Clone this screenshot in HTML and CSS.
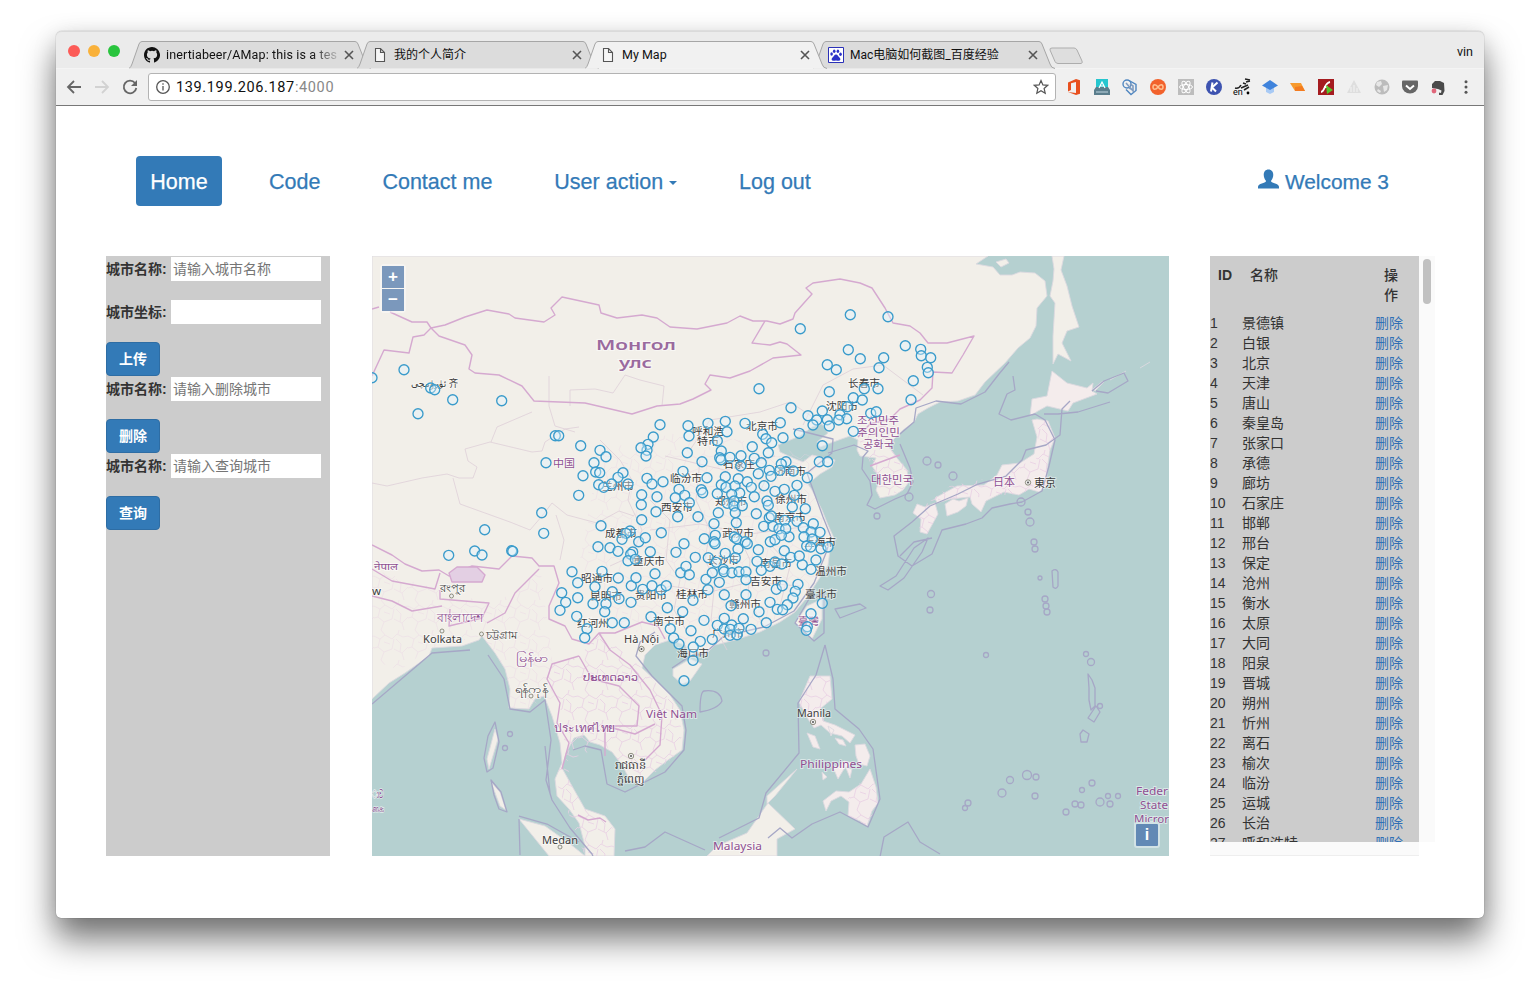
FILE: index.html
```html
<!DOCTYPE html>
<html lang="zh-CN">
<head>
<meta charset="utf-8">
<title>My Map</title>
<link rel="stylesheet" href="styles.css">
</head>
<body>
<div class="window">
  <header class="tabstrip">
    <div class="lights"><i class="red"></i><i class="amber"></i><i class="green"></i></div>
    <div class="tabs">
      <div class="tab">
        <svg class="shape" viewBox="0 0 242 28"><path d="M0 27.5Q2 26 3 23L10 3Q11 .5 13 .5H226Q228 .5 229 3L237 23Q238 27 242 27.5"/></svg>
        <svg class="fav" viewBox="0 0 16 16"><path fill="#111" d="M8 0C3.58 0 0 3.58 0 8c0 3.54 2.29 6.53 5.47 7.59.4.07.55-.17.55-.38v-1.49c-2.01.37-2.53-.49-2.69-.94-.09-.23-.48-.94-.82-1.13-.28-.15-.68-.52-.01-.53.63-.01 1.08.58 1.23.82.72 1.21 1.87.87 2.33.66.07-.52.28-.87.51-1.07-1.78-.2-3.64-.89-3.64-3.95 0-.87.31-1.59.82-2.15-.08-.2-.36-1.02.08-2.12 0 0 .67-.21 2.2.82a7.6 7.6 0 0 1 4 0c1.53-1.04 2.2-.82 2.2-.82.44 1.1.16 1.92.08 2.12.51.56.82 1.27.82 2.15 0 3.07-1.87 3.75-3.65 3.95.29.25.54.73.54 1.48v2.19c0 .21.15.46.55.38A8 8 0 0 0 8 0z"/></svg>
        <span class="title fade">inertiabeer/AMap: this is a tes</span>
        <svg class="close" viewBox="0 0 10 10"><path d="M1 1l8 8M9 1L1 9"/></svg>
      </div>
      <div class="tab">
        <svg class="shape" viewBox="0 0 242 28"><path d="M0 27.5Q2 26 3 23L10 3Q11 .5 13 .5H226Q228 .5 229 3L237 23Q238 27 242 27.5"/></svg>
        <svg class="fav page" viewBox="0 0 16 16"><path d="M3.5 1.5h5l4 4v9h-9zM8.5 1.5v4h4"/></svg>
        <span class="title cjk">我的个人简介</span>
        <svg class="close" viewBox="0 0 10 10"><path d="M1 1l8 8M9 1L1 9"/></svg>
      </div>
      <div class="tab active">
        <svg class="shape" viewBox="0 0 242 28"><path d="M0 27.5Q2 26 3 23L10 3Q11 .5 13 .5H226Q228 .5 229 3L237 23Q238 27 242 27.5"/></svg>
        <svg class="fav page" viewBox="0 0 16 16"><path d="M3.5 1.5h5l4 4v9h-9zM8.5 1.5v4h4"/></svg>
        <span class="title">My Map</span>
        <svg class="close" viewBox="0 0 10 10"><path d="M1 1l8 8M9 1L1 9"/></svg>
      </div>
      <div class="tab">
        <svg class="shape" viewBox="0 0 242 28"><path d="M0 27.5Q2 26 3 23L10 3Q11 .5 13 .5H226Q228 .5 229 3L237 23Q238 27 242 27.5"/></svg>
        <svg class="fav" viewBox="0 0 16 16"><path fill="#fff" stroke="#2b31b8" d="M.5.5h15v15H.5z"/><g fill="#2b31c8"><ellipse cx="3.6" cy="7" rx="1.3" ry="1.8"/><ellipse cx="6.2" cy="4.2" rx="1.3" ry="1.8"/><ellipse cx="9.9" cy="4.2" rx="1.3" ry="1.8"/><ellipse cx="12.5" cy="7.2" rx="1.3" ry="1.8"/><path d="M8 7.6c1.800 0 2.200 2 3.700 3.200 1.200 1.100.8 3-1 3-1 0-1.800-.3-2.700-.3s-1.700.3-2.700.3c-1.800 0-2.200-1.900-1-3C5.800 9.600 6.200 7.600 8 7.600z"/></g></svg>
        <span class="title cjk">Mac电脑如何截图_百度经验</span>
        <svg class="close" viewBox="0 0 10 10"><path d="M1 1l8 8M9 1L1 9"/></svg>
      </div>
      <svg class="newtab" viewBox="0 0 34 18"><path d="M3 1h22q2 0 3 2l5 11q1 2-1 2.500H9q-2 0-3-2L1 3q-.5-2 2-2z"/></svg>
    </div>
    <span class="user">vin</span>
  </header>

  <div class="toolbar">
    <svg class="nav-ic" viewBox="0 0 16 16"><path d="M15 8H2M8 2L2 8l6 6"/></svg>
    <svg class="nav-ic off" viewBox="0 0 16 16"><path d="M1 8h13M8 2l6 6-6 6"/></svg>
    <svg class="nav-ic" viewBox="0 0 16 16"><path d="M13 4A6.300 6.300 0 1 0 14.300 9"/><path class="solid" d="M15 1v6H9z"/></svg>
    <div class="omnibox">
      <svg class="info" viewBox="0 0 16 16"><circle cx="8" cy="8" r="6.300"/><path d="M8 7v4.500M8 4.300v1.500"/></svg>
      <span class="url">139.199.206.187<em>:4000</em></span>
      <svg class="star" viewBox="0 0 16 16"><path d="M8 1.500l1.900 4.400 4.800.4-3.600 3.200 1.100 4.700L8 11.700l-4.200 2.500 1.100-4.700L1.300 6.300l4.800-.4z"/></svg>
    </div>
    <div class="exts">
      <svg viewBox="0 0 16 16"><path fill="#e8501e" d="M2 3.500L10 0l4 1.200v13.600L10 16l-8-3 8 1V3L5 4.300V11l-3 1.500z"/></svg>
      <svg viewBox="0 0 16 16"><path fill="#26c6cf" d="M2 0h12v9H2z"/><path fill="#5a7d8c" d="M2 8h12l2 3v5H0v-5z"/><path d="M5 9l3-6 3 6M6 7h4" fill="none" stroke="#fff" stroke-width="1.200"/><path d="M2 13h12" stroke="#9fb9c4" stroke-width="1.500"/></svg>
      <svg viewBox="0 0 16 16" fill="none" stroke="#4f86c0" stroke-width="1.400"><path d="M7 1.500l7 4v6l-5 4-5-5"/><circle cx="5" cy="5" r="4"/><path d="M8 5l3 2v4L7 9M4 4l8 9" stroke="#7f9cc0" stroke-width="1.600"/></svg>
      <svg viewBox="0 0 16 16"><circle cx="8" cy="8" r="8" fill="#f2622c"/><path d="M8 8C6 5 3 5 3 8s3 3 5 0 5-3 5 0-3 3-5 0z" fill="none" stroke="#ffc090" stroke-width="1.500"/></svg>
      <svg viewBox="0 0 16 16"><path fill="#bdbdbd" d="M0 0h16v16H0z"/><g fill="none" stroke="#fff"><ellipse cx="8" cy="8" rx="6.500" ry="2.500"/><ellipse cx="8" cy="8" rx="6.500" ry="2.500" transform="rotate(60 8 8)"/><ellipse cx="8" cy="8" rx="6.500" ry="2.500" transform="rotate(120 8 8)"/></g></svg>
      <svg viewBox="0 0 16 16"><circle cx="8" cy="8" r="8" fill="#3d53b0"/><path d="M6.500 3.500l-1.500 9M11.500 3.500L6 8.500l4 4" fill="none" stroke="#fff" stroke-width="2"/></svg>
      <svg viewBox="0 0 16 16"><path d="M1 9q4 1 6-3M7 9l7-3M9 4l3 1M11 0l5 1M12 3l4-1M10 11l5-3" fill="none" stroke="#222" stroke-width="1.500"/><circle cx="14" cy="14" r="1.400"/><text x="-1" y="16" font-size="9" class="tiny">en</text></svg>
      <svg viewBox="0 0 16 16"><path fill="#a8caf5" d="M4 8h8v5l-4 2-4-2z"/><path fill="#3f83dc" d="M8 1l8 5.500-8 4.500-8-4.500z"/></svg>
      <svg viewBox="0 0 16 16"><path fill="#f79a2d" d="M0 4l11 0 4 8H5z"/><path fill="#f37b20" d="M5 8l7-1 3 5H5z"/></svg>
      <svg viewBox="0 0 16 16"><path fill="#a51c20" d="M0 0h16v16H0z"/><path d="M3 13c4 0 3-9 9-10M6 8h4" fill="none" stroke="#fff" stroke-width="1.800"/><path fill="#55c52b" d="M8 6l7 5-6 4z"/></svg>
      <svg viewBox="0 0 16 16"><path fill="#dedede" d="M8 1l7 13H1z"/><path d="M5 13V8M8 13V6M11 13V9" stroke="#f4f4f4"/></svg>
      <svg viewBox="0 0 16 16"><circle cx="8" cy="8" r="7.500" fill="#bcbcbc"/><path fill="#e6e6e6" d="M3 3l4-1 1 3-3 3-3-2zM9 7l5-1-1 5-3 2zM4 10l3 2-1 2-3-2z"/></svg>
      <svg viewBox="0 0 16 16"><path fill="#666" d="M1 1.500h14q1 0 1 1V7a8 7.500 0 0 1-16 0V2.500q0-1 1-1z"/><path d="M4 6.500l4 3.500 4-3.500" fill="none" stroke="#fff" stroke-width="2"/></svg>
      <svg viewBox="0 0 16 16"><path fill="#4a4a4a" d="M2 5l3-3h5l4 2 .5 8-2 4H9v-2.500l2 .5.500-2.500L8 10 2 9z"/><circle cx="4" cy="12" r="2.400" fill="#e0667a"/></svg>
      <svg viewBox="0 0 16 16" fill="#555"><circle cx="8" cy="2.800" r="1.500"/><circle cx="8" cy="8" r="1.500"/><circle cx="8" cy="13.200" r="1.500"/></svg>
    </div>
  </div>

  <main class="page-body">
    <nav class="nav">
      <a class="pill on">Home</a><a class="pill">Code</a><a class="pill">Contact me</a><a class="pill">User action <b class="caret"></b></a><a class="pill">Log out</a>
      <a class="pill welcome"><svg viewBox="0 0 22 20"><path d="M11 0c3.200 0 5 2.300 5 5.500 0 2.600-1 4.700-2.200 6v1.300c.2.900 8.200 2.200 8.200 5.200v2H0v-2c0-3 8-4.300 8.200-5.200v-1.300C7 10.200 6 8.100 6 5.500 6 2.300 7.800 0 11 0z"/></svg> Welcome 3</a>
    </nav>

    <div class="columns">
      <form class="side">
        <div class="field"><label>城市名称:</label><input placeholder="请输入城市名称"></div>
        <div class="field"><label>城市坐标:</label><input></div>
        <button type="button">上传</button>
        <div class="field"><label>城市名称:</label><input placeholder="请输入删除城市"></div>
        <button type="button">删除</button>
        <div class="field"><label>城市名称:</label><input placeholder="请输入查询城市"></div>
        <button type="button">查询</button>
      </form>

      <section class="map">
        <svg class="canvas" viewBox="372 256 797 600">
          <defs>
            <pattern id="web" width="34" height="30" patternUnits="userSpaceOnUse"><path class="fine" d="M0 6l6 3 5-4 7 4 5-5 6 3 5-1M6 9l-2 8 6 5 8-3 2-10M20 19l8 4 2 7M10 22l-3 8M28 23l6-6M0 18l4-1M24 4l1-4M7 0l4 5M22 9l5 5-1 8M10 12l6 2"/></pattern>
          </defs>
          <g class="land">
            <path d="M372 256H988L976 264 993 267 1000 275 1012 275 1020 272 1035 273 1045 281 1047 296 1037 308 1036 326 1030 338 1018 348 1005 363 985 382 975 395 958 401 940 402 928 408 918 414 914 422 903 430 893 440 889 447 897 458 907 470 909 482 903 490 895 495 880 498 876 490 880 478 872 466 876 458 860 456 857 450 858 440 850 436 836 441 820 447 817 442 828 433 822 424 812 427 800 436 778 445 780 452 793 458 803 462 812 455 835 460 832 467 820 474 808 484 812 490 822 510 828 525 834 538 830 550 828 565 815 585 805 600 795 612 780 622 760 632 735 640 715 645 705 655 697 652 690 656 685 645 670 640 655 645 645 655 642 668 655 680 670 695 680 710 684 730 682 750 668 760 655 770 640 785 630 780 622 765 612 752 600 745 590 742 584 735 574 738 566 753 562 768 572 786 585 809 605 816 615 829 614 856H585V846L579 823 569 809 557 796 555 779 562 763 560 743 552 716 544 696 535 699 529 709 509 708 510 689 505 669 495 653 482 636 479 640 462 646 432 648 429 656 405 673 389 683 372 699Z"/>
            <path d="M1052 256h12l-3 14 6 16 5 20 7 21-12 4-5 12 9 18-13-7-5 10V336l2-33-5-7 3-15 1-12zM996 262l10-3 3 4-8 4z"/>
            <path d="M673 669l17-10 12 5-12 17-8 3-9-8zM822 599v20l-10 20-17-16 12-17z"/>
            <path d="M768 803l27 26-18 10v17h-70l10-10 30-13zM519 819l26 7 24 17 16 13h-36zM767 796l30-27-22 27-8 8zM495 729l3 10-9 30-2-10zM491 782l9 10 6 18-6-4z"/>
            <path d="M1093 389l10-8 1 1-9 9zM1110 380l16-9M1140 368l10-6"/>
          </g>
          <g class="land pinkish">
            <path d="M1052 371l15 12 20 5 6-5-1 8 5 3-24 9-5 8-21-5-9 5-8 5 2-17 15-3zM1032 420l5-1 11 2 7 17-5 12-3 20 0 16-8 6-10-3-10 6-15-3-18 9-5 11-9-8-2-7-20 2-13 4-2-5 22-12 27-1 13-10 5-10 18-2 14-9 3-17zM945 504l8-5 6 2 9-3-2 8-8 6-11 4zM917 504l8 3 10-4 3 11-11 20-7-2 1-13-8-6z"/>
            <path d="M810 676h20l2 23-12 10 3 12 12 4 8 4 12 6-5 8-8-7-12-3-9-8-7 3-6-9-9-17zM807 733l8 3 5 13-7-2zM855 745l10-1 5 12-3 10-8-2-3-8zM870 769l6 18 2 16-6 8-5 15-7-5-12-5 1-14-8-6-10 5-5 10-3-10 13-10 13 1 12-8zM832 765l6 2 6-6 8 2-8 6-6 10zM846 768l6 1-2 9zM828 726l6 4-3 6zM835 738l8 2 3 6-7-2zM822 772l5 5-4 3z"/>
          </g>
          <g class="weave">
            <path d="M372 569L440 590 489 603 515 593 540 566 553 664 560 703 545 697 529 709 510 708 505 669 482 636 430 648 400 670 372 660Z" opacity=".45"/>
            <path d="M579 656L552 664 547 679 560 703 565 753 572 786 585 809 614 829V856H585L555 779 562 763 605 745 640 785 682 750 680 710 642 668 600 633Z"/>
            <path d="M858 438L890 420 903 432 889 447 909 470 903 490 880 498 872 466Z"/>
            <path d="M690 430L835 460 808 484 834 538 815 585 760 632 690 650 600 620 580 560 600 450Z" opacity=".4"/>
            <path d="M1037 419l11 2 7 17-5 12-3 20 0 16-30 8-87 7 20-15 50-10 40-20zM917 504l18-1 3 11-11 20-7-2zM810 676h20l2 23-12 10 7 14-29-17zM870 769l8 34-11 23-19-10v-17z"/>
          </g>
          <g class="province">
            <path d="M372 483l15 3 35-8 25-4 12 4 14 0 4-11-9-6-3-12 25-7 42 10 10-1 3-9 20-13 14-2M453 478l7 26 50 18 20 8 12-14 10-13 15 12 30 8 22-12 15 5M491 442l6-15 35-15M549 376l0 30 6 20 20 6M570 406l0-16 25-1 18 4 12-18 15 5M560 560l4-20-8-25M600 440l20 20 12 20-4 20 14 30-10 26-22 10M640 380l24 6-2 20M650 500l20 20-4 40 14 20-6 30 12 20M700 460l-4 40 14 30-5 30 10 20-4 40 16 30M740 500l-4 30 14 30-2 40 16 26M770 470l-12 26 20 20-6 30 18 20-10 40M640 600l30-14 40 6 40-10 50 4M650 530l50-6 50 10 60-8M665 456l60 14 50-14M690 450l20-30 50-8 30-10 30 20M803 425l20-40 30-16 30-4 40 30"/>
          </g>
          <g class="border">
            <path d="M372 309l7-2M390 312l22 10h15l4 6 14-3 20-8 22-7 22 4 6 4 29 4 11-7-4-7 11-11 37 8 2 8 16 5 25-3 15 3 13 9 27 2 30-6 13-7 13 5h14l13 3 13-5 2-6 17-19-6-6 7-5 27-4 20 4 12 5 13 20 8 15 17 3 10 7 8 10h19l27-7-11 19-11 18-19-1-1 16-12 12-20 9-10 10-20 5-12 13M431 328l8 8 26 9 7 10-3 14 6 4 24 2 23 11 12 15 51 2 47 11 25-8 23-2 13-5 18-9-6-6 5-9 20 3 20-7 23-13 28-3-14-11-7-2-10 3-18-2 13-22M431 328l-7 7-11 2-4 16-25-3-12 26"/>
            <path d="M372 545l20 10 13 9 17 7 17-1 10 6 23-10 27 3 13-13 20 2 7 8h15l5 17-10 23v13l16 7 7 13 17 5 10-11h16l27-11 16 4 7 13M372 569l20 12 43 8 5-16M440 590v9l49 4-7 15-33 8 1-17M487 623l18-10 10-20 24-24M372 596l20 5 20 10 30-5M579 656l-27 8-5 15 13 24-3 20 12 20-7 26M579 656l13 23 27 7 20 20-2 20-32 0v30M599 633l11 17 20 15 20 25 12 25-2 30-15 15M605 726l30 8 20-10M578 815l10 5 12-2 6 4M870 466l16-6 14-5"/>
            <path class="block" d="M449 573l8-6 20 0 8 8-3 7-30 0z"/>
          </g>
          <g class="marine">
            <path d="M372 704L405 676 432 653 470 650M488 655l16 24 6 30 20 3 15-12 6 40-5 40 6 20 18 28 22 26 8 20M545 746l5 47M573 750l12-4 16 4 6 34 18 8 40-20 19-22 2-20-4-24-30-30-16-20 4-14 15-10M700 712q0-20 4-21 16-2 18 10-4 8-22 11zM672 668l18-12 14-2 20-18 40-9 30-16 20-28 12-30 5-16-8-20-16-44 25-20 1-14-40-10M900 444l10 24 3 14-6 12-12 5-20 10-8-4 5-10-2-14-8-12 1-12 5-6-14-6-26 8M900 434l14-12 2-14 20-7 25 3 24-12 14-18 10-12M1013 376l2 14-8 4-8 20 12 6 24-6 10 6 10 20-6 26-7 25-20 11-12 2-18 4-10 10-16 6-24 6-10 24-20 12-14-10-4-20 18-14 18-16 28-12 20-10 28-8 16-16 4-10 20-5 14-10 2-26 8-8M1044 414l14 0 20-2 32-10M1092 391l12-10 20-8 4 8-20 12-12-2M900 556l14-14 18-4M825 645l8 34 2 30 24 20 14 20 7 50-12 28-28-15-28 12-20 14-12-10-12 10M825 645l-9 30-18 28 1 50-33 40-7 25-40 20M519 819l1 36M519 816l28 8 32 18M705 850l-40-18-20 15-20 4M795 623l14-24 15-6v40l-10 8zM880 857l4-20 24-15 12 20 20 12M495 722l4 20-6 26-6 4-3-14 4-22zM491 780l10 12 6 20-8-3-5-14zM880 586l16-10 18-28 14-10-6 14-18 26-16 12zM835 609l25-5 6 4-26 10z"/>
            <path d="M1052 571q4-3 6 1v14q-2 4-5 1zM1088 674l4 6 3 8 0 18-4 4-2-10 0-12zM1092 712l4-6 4 6-6 10-6-4zM1083 730l6 4-2 8-6 0-1-8z"/>
            <g>
              <circle cx="927" cy="461" r="4"/><circle cx="938" cy="465" r="3"/><circle cx="953" cy="476" r="4"/><circle cx="909" cy="497" r="4"/><circle cx="1021" cy="502" r="4"/><circle cx="1028" cy="512" r="3"/><circle cx="1030" cy="522" r="4"/><circle cx="1034" cy="542" r="3"/><circle cx="1035" cy="549" r="3"/><circle cx="931" cy="594" r="3.500"/><circle cx="930" cy="610" r="3"/><circle cx="1045" cy="599" r="3"/><circle cx="1046" cy="606" r="3"/><circle cx="1047" cy="612" r="3"/><circle cx="1040" cy="578" r="2"/><circle cx="986" cy="655" r="2.500"/><circle cx="766" cy="653" r="3"/><circle cx="1086" cy="654" r="2.500"/><circle cx="1091" cy="662" r="3.500"/><circle cx="1100" cy="706" r="2.500"/><circle cx="1027" cy="775" r="4.500"/><circle cx="1036" cy="777" r="3"/><circle cx="1010" cy="780" r="3.500"/><circle cx="1002" cy="793" r="4"/><circle cx="1035" cy="796" r="3"/><circle cx="1092" cy="783" r="3"/><circle cx="1082" cy="790" r="2.500"/><circle cx="1075" cy="804" r="3"/><circle cx="1081" cy="805" r="3"/><circle cx="1066" cy="812" r="3"/><circle cx="1100" cy="802" r="4"/><circle cx="1110" cy="804" r="3"/><circle cx="1108" cy="796" r="2.500"/><circle cx="1118" cy="796" r="2.500"/><circle cx="968" cy="803" r="3"/><circle cx="965" cy="808" r="2.500"/><circle cx="510" cy="734" r="2.500"/><circle cx="505" cy="748" r="2.500"/><circle cx="877" cy="516" r="3"/>
            </g>
          </g>
          <g class="dots"><circle cx="451.500" cy="596" r="2"/><circle cx="442" cy="631" r="2"/><circle cx="481.500" cy="634" r="2"/><circle cx="531" cy="696" r="2"/><circle cx="560" cy="847" r="2"/><circle cx="641.500" cy="649" r="2.700"/><circle cx="631" cy="756" r="2.700"/><circle cx="813" cy="722" r="2.700"/><circle cx="1028" cy="482.500" r="2.700"/><g class="capital"><circle cx="641.500" cy="649" r="1"/><circle cx="631" cy="756" r="1"/><circle cx="813" cy="722" r="1"/><circle cx="1028" cy="482.500" r="1"/></g></g>
          <g id="labels"></g>
          <g id="cities"></g>
        </svg>
        <div class="zoom"><button type="button">+</button><button type="button">−</button></div>
        <button type="button" class="attrib">i</button>
      </section>

      <section class="list">
        <div class="scroller">
          <table>
            <thead><tr><th class="c-id">ID</th><th class="c-name">名称</th><th class="c-op">操作</th></tr></thead>
            <tbody id="rows"></tbody>
          </table>
        </div>
        <div class="track"><i></i></div>
        <div class="hscroll"></div>
      </section>
    </div>
  </main>
</div>
<script src="app.js"></script>
</body>
</html>
```

FILE: styles.css
```css
* { box-sizing: border-box; }
body { margin: 0; padding: 31px 56px 0; height: 998px; overflow: hidden; background: #fff; color: #333; font: 14px/20px "Liberation Sans", "Noto Sans CJK SC", sans-serif; }
a { color: #337ab7; text-decoration: none; }
.window { width: 1428px; height: 887px; border-radius: 6px 6px 5px 5px; background: #fff; box-shadow: 0 0 1px rgba(0,0,0,.55), 0 22px 34px rgba(0,0,0,.5), 0 6px 24px rgba(0,0,0,.14); }

.tabstrip { display: flex; height: 38px; padding-top: 9px; background: #ebebeb; border-radius: 6px 6px 0 0; border-top: 1px solid #dadada; border-bottom: 1px solid #f4f4f4; font: 12.5px/26px Roboto, "Noto Sans CJK SC", sans-serif; color: #111; }
.lights { display: flex; gap: 8px; width: 73px; padding: 4px 0 0 12px; }
.lights i { width: 12px; height: 12px; border-radius: 50%; }
.red { background: #fc5b57; } .amber { background: #f9b13a; } .green { background: #29c43d; }
.tabs { display: flex; flex: 1; }
.tab { position: relative; display: flex; align-items: center; width: 242px; height: 28px; margin-right: -14px; padding: 0 17px 0 15px; }
.shape { position: absolute; inset: 0; width: 242px; height: 28px; fill: #dcdcdc; stroke: #a6a6a6; }
.active { z-index: 2; }
.active .shape { fill: #f1f1f1; }
.fav { position: relative; flex: none; width: 16px; height: 16px; margin-right: 6px; }
.page { fill: #f6f6f6; stroke: #555; stroke-width: 1.1; }
.title { position: relative; flex: 1; white-space: nowrap; overflow: hidden; }
.title.cjk { font-size: 12px; }
.fade { -webkit-mask-image: linear-gradient(90deg, #000 84%, transparent 102%); mask-image: linear-gradient(90deg, #000 84%, transparent 102%); letter-spacing: .13px; }
.close { position: relative; width: 10px; height: 10px; margin-left: 5px; stroke: #555; stroke-width: 1.6; fill: none; }
.newtab { width: 34px; height: 18px; margin: 6px 0 0 8px; fill: #dedede; stroke: #adadad; }
.user { padding-right: 11px; line-height: 22px; }

.toolbar { display: flex; align-items: center; height: 37px; padding: 0 10px 0 10px; background: #f0f0f0; border-bottom: 1px solid #777; }
.nav-ic { width: 16px; height: 16px; margin-right: 12px; fill: none; stroke: #666; stroke-width: 1.8; }
.nav-ic.off { stroke: #d2d2d2; }
.nav-ic .solid { fill: #666; stroke: none; }
.omnibox { display: flex; align-items: center; width: 908px; height: 28px; margin-left: -2px; padding: 0 6px; background: #fff; border: 1px solid #b3b3b3; border-radius: 3px; }
.info { width: 16px; height: 16px; fill: none; stroke: #555; stroke-width: 1.3; }
.url { flex: 1; margin-left: 5px; padding-top: 1px; font: 14.5px/25px Roboto, sans-serif; letter-spacing: .64px; color: #111; }
.url em { font-style: normal; color: #888; }
.star { width: 16px; height: 16px; fill: none; stroke: #555; stroke-width: 1.2; }
.exts { display: flex; gap: 12px; margin-left: 10px; }
.exts svg { width: 16px; height: 16px; overflow: visible; }
.tiny { font-family: Roboto, sans-serif; }

.page-body { padding: 50px 50px 0; }
.nav { display: flex; gap: 32px; margin: 0 30px 50px; font-size: 21.5px; line-height: 30px; }
.pill { padding: 11px 15px 9px; height: 50px; border-radius: 4px; white-space: nowrap; -webkit-text-stroke: .25px currentColor; }
.pill.on { background: #337ab7; color: #fff; width: 86px; text-align: center; padding: 11px 0 9px; }
.caret { display: inline-block; margin-left: 0; vertical-align: middle; border: 4px solid transparent; border-top-color: #337ab7; border-bottom: 0; }
.welcome { margin-left: auto; font-size: 20.9px; }
.welcome svg { width: 21px; height: 20px; fill: #337ab7; vertical-align: 0; }

.columns { display: flex; height: 600px; }
.side { flex: none; width: 224px; background: #ccc; }
.field { display: flex; align-items: center; height: 26px; margin-bottom: 17px; }
.field label { width: 65px; font-weight: 700; }
.field input { width: 150px; height: 24px; padding: 0 2px; border: 0; font: 14px "Liberation Sans", "Noto Sans CJK SC", sans-serif; color: #333; }
.field input::placeholder { color: #757575; }
.side button { display: block; width: 54px; height: 34px; padding: 0 0 3px; border: 1px solid #2e6da4; border-radius: 4px; background: #337ab7; color: #fff; font: 700 14px "Noto Sans CJK SC", sans-serif; }

.map { position: relative; flex: none; width: 797px; margin-left: 42px; background: #b5d0d0; overflow: hidden; }
.canvas { display: block; width: 797px; height: 600px; }
.land { fill: #f2efe9; stroke: #dcd9e0; stroke-width: .9; stroke-linejoin: round; }
.pinkish { fill: #f4ecec; }
.weave { fill: url(#web); }
.fine { fill: none; stroke: #e8cfe3; stroke-width: .8; }
.province { fill: none; stroke: #decfd8; stroke-width: .8; stroke-linejoin: round; }
.border { fill: none; stroke: #d5a9d0; stroke-width: 1.4; stroke-linejoin: round; }
.block { fill: #e3cfe3; }
.marine { fill: none; stroke: #a6a7c6; stroke-width: 1.3; stroke-linejoin: round; }
.dots { fill: #eee; stroke: #776; stroke-width: .8; }
.capital { fill: #555; stroke: none; }
#labels text { font-family: "Noto Sans", "Noto Sans CJK SC", "Noto Sans CJK KR", "DejaVu Sans", sans-serif; fill: #3d3d3d; stroke: rgba(255,255,255,.5); stroke-width: 1.8px; paint-order: stroke; }
#labels .country { fill: #8f5092; }
#labels .major { font-weight: 600; fill: #9a6a9e; }
#cities circle { fill: rgba(225,246,255,.4); stroke: #3a9bcb; stroke-width: 1.35; }
.zoom { position: absolute; left: 8px; top: 8px; display: grid; gap: 1px; padding: 2px; background: rgba(255,255,255,.4); border-radius: 4px; }
.zoom button, .attrib { width: 22px; height: 22px; padding: 0; border: 0; background: #7b98bc; color: #fff; font: 700 17px/20px "Liberation Sans"; }
.attrib { position: absolute; right: 9px; bottom: 8px; width: 26px; height: 26px; background: #6289b5; border: 2px solid #d2e2e5; border-radius: 3px; font-size: 16px; }

.list { display: grid; flex: none; grid-template: 586px 14px / 209px 16px; margin-left: 41px; }
.scroller { background: #ccc; overflow: hidden; }
table { width: 209px; border-collapse: collapse; table-layout: fixed; }
th { height: 57px; padding: 9px 8px 8px; vertical-align: top; text-align: left; font-weight: 700; }
.c-id { width: 32px; padding-right: 0; }
.c-name { width: 133px; font-weight: 500; }
.c-op { width: 44px; padding: 9px 20px 8px 9px; font-weight: 500; }
td { height: 20px; padding: 0; white-space: nowrap; overflow: hidden; }
td a { color: #3070b6; }
.track { padding: 3px 4px; background: #fafafa; }
.track i { display: block; width: 8px; height: 45px; border-radius: 4px; background: #c1c1c1; }
.hscroll { background: #fafafa; border-bottom: 1px solid #eee; }
```

FILE: app.js
```js
const NS = 'http://www.w3.org/2000/svg';

const names = ['景德镇', '白银', '北京', '天津', '唐山', '秦皇岛', '张家口', '承德', '廊坊', '石家庄', '邯郸', '邢台', '保定', '沧州', '衡水', '太原', '大同', '阳泉', '晋城', '朔州', '忻州', '离石', '榆次', '临汾', '运城', '长治', '呼和浩特'];
document.getElementById('rows').innerHTML = names
  .map((n, i) => `<tr><td>${i + 1}</td><td>${n}</td><td><a>删除</a></td></tr>`).join('');

// Place names: text, left, baseline, width, size, kind
const labels = [
  ['Монгол', 596, 350, 80, 14.5, 'major'], ['улс', 619, 368, 33, 14.5, 'major'],
  ['ئۈرۈمچى 齐', 411, 387, 47, 10], ['中国', 553, 467, 22, 10, 'country'],
  ['长春市', 848, 387, 32, 10.5], ['沈阳市', 826, 410, 32, 10.5],
  ['조선민주', 857, 424, 42, 10, 'country'], ['주의인민', 857, 436, 43, 10, 'country'], ['공화국', 863, 448, 31, 10, 'country'],
  ['대한민국', 871, 484, 42, 11, 'country'], ['日本', 993, 486, 22, 11, 'country'], ['東京', 1034, 487, 22, 11],
  ['呼和浩', 692, 435, 32, 9.8], ['特市', 697, 445, 22, 9.8], ['北京市', 746, 430, 32, 10.5],
  ['石家庄', 723, 468, 32, 10.5], ['济南市', 774, 475, 32, 10.5], ['临汾市', 670, 482, 32, 10.5],
  ['兰州市', 602, 490, 32, 10.5], ['郑州市', 715, 505, 32, 10.5], ['徐州市', 775, 503, 32, 10.5], ['西安市', 661, 511, 32, 10.5],
  ['南京市', 774, 521, 32, 10.5], ['成都市', 605, 537, 32, 10.5], ['武汉市', 722, 537, 32, 10.5], ['上海市', 804, 546, 32, 10.5],
  ['重庆市', 633, 565, 32, 10.5], ['长沙市', 707, 564, 32, 10.5], ['南昌市', 760, 567, 32, 10.5],
  ['温州市', 815, 575, 32, 10.5], ['昭通市', 581, 582, 32, 10.5], ['吉安市', 750, 585, 32, 10.5], ['昆明市', 590, 600, 32, 10.5],
  ['贵阳市', 635, 599, 32, 10.5], ['桂林市', 676, 598, 32, 10.5], ['赣州市', 729, 608, 32, 10.5], ['臺北市', 805, 598, 32, 10.5],
  ['红河州', 577, 627, 32, 10.5], ['南宁市', 653, 625, 32, 10.5], ['广州市', 712, 637, 32, 10.5], ['海口市', 677, 657, 32, 10.5],
  ['臺灣', 798, 625, 21, 10.5, 'country'],
  ['नेपाल', 374, 570, 24, 10, 'country'], ['w', 372, 595, 9, 11], ['রংপুর', 440, 592, 25, 11],
  ['বাংলাদেশ', 437, 622, 46, 11.5, 'country'], ['Kolkata', 423, 643, 39, 11], ['চট্টগ্রাম', 486, 639, 31, 11],
  ['မြန်မာ', 516, 662, 31, 11, 'country'], ['ရန်ကုန်', 515, 693, 33, 11], ['Hà Nội', 624, 643, 35, 11],
  ['ປະເທດລາວ', 583, 681, 55, 11, 'country'], ['ประเทศไทย', 554, 732, 61, 11, 'country'], ['Việt Nam', 646, 718, 51, 11, 'country'],
  ['រាជធានី', 615, 769, 31, 11], ['ភ្នំពេញ', 617, 783, 27, 11], ['Manila', 797, 717, 34, 11], ['Philippines', 800, 768, 62, 11, 'country'],
  ['Malaysia', 713, 850, 49, 11.5, 'country'], ['Medan', 542, 844, 36, 11],
  ['ාව', 372, 798, 12, 11, 'country'], ['கை', 372, 812, 12, 11, 'country'],
  ['Feder', 1136, 795, 32, 11, 'country'], ['State', 1140, 809, 28, 11, 'country'], ['Micror', 1134, 823, 35, 11, 'country'],
];
const labelLayer = document.getElementById('labels');
for (const [text, x, y, w, size, kind] of labels) {
  const el = document.createElementNS(NS, 'text');
  el.textContent = text;
  el.setAttribute('x', x);
  el.setAttribute('y', y);
  el.setAttribute('font-size', size);
  el.setAttribute('textLength', w);
  el.setAttribute('lengthAdjust', 'spacingAndGlyphs');
  if (kind) el.setAttribute('class', kind);
  labelLayer.append(el);
}

// City markers, grouped by map tile; three units per pixel inside a tile
const tiles = [
  [372, 256, '0,365 96,341 176,396 188,401 242,431 138,473 389,434 550,539 560,539 626,569 684,583 702,602 666,620 522,620 633,659 671,648 683,650 753,650 738,664 680,686 695,694 719,684 768,684 620,718 509,770 515,832 338,821 308,885 330,897 230,898 419,884 422,886 687,809 774,825 762,832 750,850 678,872 714,875 738,886 800,857 782,888 776,895'],
  [640, 256, '631,176 744,182 481,218 625,281 661,308 731,305 717,335 796,269 562,326 589,341 357,398 568,407 673,398 714,398 640,425 667,432 453,455 547,465 622,452 504,479 530,492 519,507 562,491 568,510 600,476 620,488 596,492 692,472 709,467 640,526 478,532 547,569 538,617 563,617 502,665 60,506 40,543 24,565 21,583 18,600 3,575 144,509 147,540 204,502 256,496 261,527 232,554 315,502 421,500 368,535 378,548 395,560 429,545 337,572 385,590 142,590 186,617 244,585 239,605 243,611 270,604 303,599 343,607 364,620 302,630 438,617 424,624 129,646 201,665 256,662 21,667 36,684 69,677 355,653 388,643 393,661 420,643 295,668 322,677 460,645 244,686 258,694 285,690 334,694 372,689 471,688 117,700 134,718 106,725 184,701 188,710 232,713 299,711 343,722 405,706 433,700 5,716 51,722 148,740 48,767 4,746 113,782 174,782 235,770 275,715 262,742 282,735 282,750 307,749 286,770 381,735 385,748 349,773 457,753 496,758 463,718 222,803 289,800 5,791 64,830 371,811 388,785 394,780 399,811 434,793 417,818 471,796 490,815 520,803 513,828 540,829 492,842 517,849 447,842 437,818 226,838 193,848 222,857 225,863 283,843 290,848 316,857 322,863 294,879 355,881 391,857 405,851 424,838 132,863 16,845 31,887 108,889 433,884 500,870 512,873 543,878 564,873 256,892'],
  [900, 256, '62,280 64,299 92,305 82,334 85,350 40,374 33,431'],
  [372, 556, '600,47 690,46 617,80 739,66 569,110 581,139 564,163 617,125 669,92 663,143 702,143 698,167 721,107 741,128 777,139 778,89 792,65 614,181 645,218 638,245 721,200 757,200 768,14 790,10'],
  [640, 556, '45,53 8,100 36,89 63,101 79,89 82,155 33,182 128,167 91,218 101,246 117,264 159,133 204,101 198,70 217,50 238,79 122,50 138,31 148,56 166,4 205,5 229,19 250,40 252,47 253,116 276,50 297,47 318,47 318,71 318,116 273,149 192,193 153,224 181,256 160,273 159,313 132,374 217,250 232,208 253,187 310,188 253,219 275,207 271,220 270,238 291,236 297,217 333,220 379,200 357,167 390,139 409,100 427,89 474,85 466,106 459,126 442,146 412,160 428,161 351,16 364,43 390,31 405,18 425,24 452,4 487,26 513,40 528,12 547,142 513,173 502,212 499,223 286,5 478,0'],
];
const cityLayer = document.getElementById('cities');
for (const [ox, oy, points] of tiles) {
  for (const p of points.split(' ')) {
    const [x, y] = p.split(',').map(Number);
    const c = document.createElementNS(NS, 'circle');
    c.setAttribute('cx', (ox + x / 3).toFixed(1));
    c.setAttribute('cy', (oy + y / 3).toFixed(1));
    c.setAttribute('r', 5);
    cityLayer.append(c);
  }
}
```
